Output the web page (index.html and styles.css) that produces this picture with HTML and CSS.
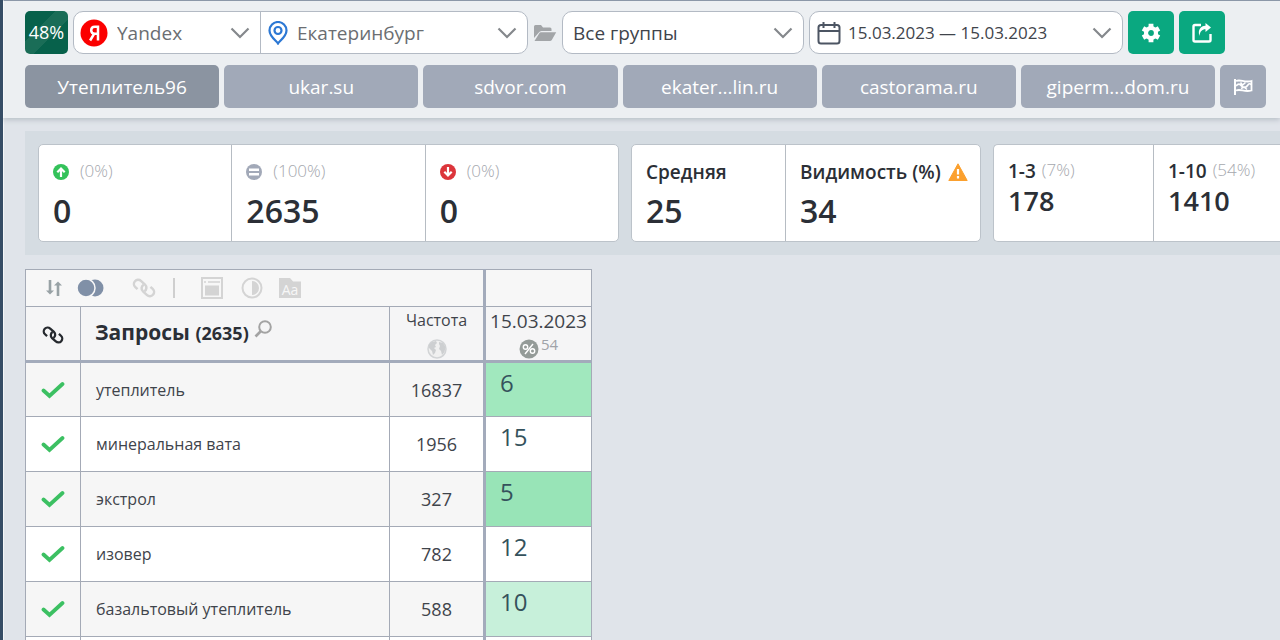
FILE: index.html
```html
<!DOCTYPE html>
<html lang="ru">
<head>
  <meta charset="utf-8">
  <title>Позиции - Утеплитель96</title>
  <meta name="viewport" content="width=device-width, initial-scale=1">
  <link rel="stylesheet" href="styles.css">
</head>
<body>
  <svg class="sprite" aria-hidden="true">
    <symbol id="chevron" viewBox="0 0 20 12"><path d="M1.5 1.5 10 10l8.500-8.500" fill="none" stroke="currentColor" stroke-width="2.200"/></symbol>
    <symbol id="check" viewBox="0 0 24 18"><path d="M2.500 9.500 8.500 15 21.500 3" fill="none" stroke="#3cc062" stroke-width="3.800" stroke-linecap="round"/></symbol>
    <symbol id="link" viewBox="0 0 24 24">
      <g fill="none" stroke="currentColor" stroke-width="2.500" transform="rotate(42 12 12)">
        <path d="M8 17.200H5a4.200 4.200 0 0 1 0-8.400h5.500a4.200 4.200 0 0 1 4 5.400"/>
        <path d="M16 6.800h3a4.200 4.200 0 0 1 0 8.400h-5.500a4.200 4.200 0 0 1-4-5.400"/>
      </g>
    </symbol>
  </svg>

  <div class="app">
    <header class="topbar">
      <div class="filters">
        <div class="progress">48%</div>

        <div class="field-group">
          <label class="field engine">
            <svg width="28" height="28" viewBox="0 0 28 28" aria-hidden="true">
              <circle cx="14" cy="14" r="13.500" fill="#fb0000"/>
              <path d="M18 6.500v15M18 7.700h-3.200c-4.800 0-4.800 7 0 7H18M14.300 14.500l-4.200 7" fill="none" stroke="#fff" stroke-width="2.500"/>
            </svg>
            <select aria-label="Поисковая система"><option>Yandex</option></select>
            <svg class="chevron" width="20" height="12"><use href="#chevron"/></svg>
          </label>
          <label class="field city">
            <svg width="20" height="24" viewBox="0 0 20 24" fill="none" stroke="#2c78d4" stroke-width="2.200" aria-hidden="true">
              <path d="M10 22.500C8.500 20 1.500 15.500 1.500 9.500a8.500 8.500 0 0 1 17 0c0 6-7 10.500-8.500 13z"/>
              <circle cx="10" cy="9.500" r="3.500"/>
            </svg>
            <select aria-label="Регион"><option>Екатеринбург</option></select>
            <svg class="chevron" width="20" height="12"><use href="#chevron"/></svg>
          </label>
        </div>

        <svg class="folder" width="24" height="18" viewBox="0 0 24 18" aria-hidden="true">
          <path d="M1 14V2.500A1.500 1.500 0 0 1 2.500 1H8l2 2.500h7A1.500 1.500 0 0 1 18.500 5v2H8.500a3 3 0 0 0-2.600 1.500z"/>
          <path d="M1.500 17 6.300 9.300A2 2 0 0 1 8 8.300h15.200l-4.400 7.600a2.200 2.200 0 0 1-1.900 1.100z"/>
        </svg>

        <label class="field rounded groups">
          <select aria-label="Группа"><option>Все группы</option></select>
          <svg class="chevron" width="20" height="12"><use href="#chevron"/></svg>
        </label>

        <button type="button" class="field rounded dates">
          <svg width="24" height="24" viewBox="0 0 24 24" fill="none" stroke="#4c5563" stroke-width="2" aria-hidden="true">
            <rect x="1.500" y="4" width="21" height="18.500" rx="2.500"/>
            <path d="M1.500 10h21M6.500 1v6M17.500 1v6"/>
          </svg>
          <span>15.03.2023 — 15.03.2023</span>
          <svg class="chevron" width="20" height="12"><use href="#chevron"/></svg>
        </button>

        <button type="button" class="action" aria-label="Настройки">
          <svg width="20" height="20" viewBox="0 0 20 20">
            <circle cx="10" cy="10" r="5" fill="none" stroke="#fff" stroke-width="4.200"/>
            <path d="M10 .8v4M10 15.200v4M2 5.400l3.500 2M14.500 12.600l3.500 2M2 14.600l3.500-2M14.500 7.400l3.500-2" stroke="#fff" stroke-width="4.800"/>
          </svg>
        </button>
        <button type="button" class="action" aria-label="Экспорт">
          <svg width="20" height="20" viewBox="0 0 20 20">
            <path d="M9 2H3a1.500 1.500 0 0 0-1.500 1.500V17A1.500 1.500 0 0 0 3 18.500h14a1.500 1.500 0 0 0 1.500-1.500v-6" fill="none" stroke="#fff" stroke-width="2.400"/>
            <path d="M13.500 0l5.500 4.500L13.500 9V6.300C10 6.300 8 8.500 7.500 13 5.500 7 8.500 3 13.500 2.800z" fill="#fff"/>
          </svg>
        </button>
      </div>

      <nav class="sites">
        <button type="button" class="site active">Утеплитель96</button>
        <button type="button" class="site">ukar.su</button>
        <button type="button" class="site">sdvor.com</button>
        <button type="button" class="site">ekater...lin.ru</button>
        <button type="button" class="site">castorama.ru</button>
        <button type="button" class="site">giperm...dom.ru</button>
        <button type="button" class="site flag" aria-label="Флаг">
          <svg width="20" height="18" viewBox="0 0 20 18" fill="none" stroke="#fff">
            <path d="M2 1v16" stroke-width="2"/>
            <path d="M3 3c5-2 8 2 15.500 0v9.500C11 14.500 8 10.500 3 12.500" stroke-width="1.800"/>
            <path d="M3 8c2.500-3 4-2 5.500 0s4.500 2 6-.5 2.500-2 4-1M7.500 4.500l2 2.500 3-2.500M8 10.500l3-1.500 3 2.500" stroke-width="1.600"/>
          </svg>
        </button>
      </nav>
    </header>

    <section class="summary">
      <div class="cards trend">
        <div class="card">
          <div class="card-title">
            <svg width="16" height="16" viewBox="0 0 16 16"><circle cx="8" cy="8" r="8" fill="#34c25a"/><path d="M8 13V5M4.300 8.200 8 4.500l3.700 3.700" fill="none" stroke="#fff" stroke-width="2.200"/></svg>
            <span class="share">(0%)</span>
          </div>
          <div class="value">0</div>
        </div>
        <div class="card">
          <div class="card-title">
            <svg width="16" height="16" viewBox="0 0 16 16"><circle cx="8" cy="8" r="8" fill="#a2a9b8"/><path d="M3 5.700h10M3 10.300h10" stroke="#fff" stroke-width="2.400"/></svg>
            <span class="share">(100%)</span>
          </div>
          <div class="value">2635</div>
        </div>
        <div class="card">
          <div class="card-title">
            <svg width="16" height="16" viewBox="0 0 16 16"><circle cx="8" cy="8" r="8" fill="#dc353b"/><path d="M8 3v8M4.300 7.800 8 11.500l3.700-3.700" fill="none" stroke="#fff" stroke-width="2.200"/></svg>
            <span class="share">(0%)</span>
          </div>
          <div class="value">0</div>
        </div>
      </div>

      <div class="cards average">
        <div class="card">
          <div class="card-title">Средняя</div>
          <div class="value">25</div>
        </div>
        <div class="card">
          <div class="card-title">Видимость (%)
            <svg width="20" height="18" viewBox="0 0 20 18"><path d="M10 .8 19.200 17.500H.8z" fill="#fba02e" stroke="#fba02e" stroke-linejoin="round"/><path d="M10 6v5.500M10 13v2.500" stroke="#fff" stroke-width="2.200"/></svg>
          </div>
          <div class="value">34</div>
        </div>
      </div>

      <div class="cards tops">
        <div class="card">
          <div class="card-title">1-3 <span class="share">(7%)</span></div>
          <div class="value">178</div>
        </div>
        <div class="card">
          <div class="card-title">1-10 <span class="share">(54%)</span></div>
          <div class="value">1410</div>
        </div>
      </div>
    </section>

    <table class="positions">
      <colgroup>
        <col class="col-check"><col class="col-query"><col class="col-freq"><col class="col-pos">
      </colgroup>
      <thead>
        <tr class="tools-row">
          <td colspan="3">
            <div class="tools">
              <svg width="18" height="16" viewBox="0 0 18 16" fill="none" stroke="#98a2a5" stroke-width="2.600"><path d="M5 0v12M13 16V4"/><path d="M1 10.500l4 4 4-4zM9 5.500l4-4 4 4z" fill="#98a2a5" stroke="none"/></svg>
              <svg class="tool-toggle" width="27" height="18" viewBox="0 0 27 18" fill="#8090a7"><circle cx="18" cy="9" r="8.500"/><circle cx="9" cy="9" r="9" stroke="#f7f7f7" stroke-width="1.500"/></svg>
              <svg class="tool-link" width="24" height="24"><use href="#link"/></svg>
              <span class="divider"></span>
              <svg class="tool-window" width="22" height="22" viewBox="0 0 22 22" fill="none" stroke="#d4d4d4" stroke-width="2"><path d="M1 1h20v20H1z"/><path d="M3 5h2M7 5h12" stroke-width="1.600"/><path d="M5 9.500h12v8H5z" fill="#d4d4d4"/></svg>
              <svg class="tool-contrast" width="22" height="22" viewBox="0 0 22 22"><circle cx="11" cy="11" r="9.500" fill="none" stroke="#d4d4d4" stroke-width="2"/><path d="M11 4a7 7 0 0 1 0 14z" fill="#d4d4d4"/></svg>
              <span class="tool-case">Aa</span>
            </div>
          </td>
          <td></td>
        </tr>
        <tr class="head-row">
          <th scope="col" aria-label="Ссылка"><svg class="head-link" width="22" height="22"><use href="#link"/></svg></th>
          <th scope="col" class="query">Запросы <small>(2635)</small>
            <svg class="search" width="18" height="18" viewBox="0 0 18 18" fill="none" stroke="#a3a3a3" stroke-width="2"><circle cx="11" cy="7" r="5.800"/><path d="M7 11l-5.500 5.500" stroke-width="2.600"/></svg>
          </th>
          <th scope="col" class="freq">Частота
            <svg width="20" height="20" viewBox="0 0 20 20"><circle cx="10" cy="10" r="9" fill="#f0f0f0" stroke="#d2d4d6" stroke-width="1.500"/><path d="M2 5.500 5 3l4-1 1 2-2 2 1 2-2 1 2 2-1 3-2 2-1-4-3-3zM12 3l4 1 2.500 4-1 5-2.500 3-1-4-2-2 1-3-1-2z" fill="#cdcfd1"/></svg>
          </th>
          <th scope="col" class="date">15.03.2023
            <span class="coverage">
              <svg width="20" height="20" viewBox="0 0 20 20"><circle cx="10" cy="10" r="9.500" fill="#949b98"/><g fill="none" stroke="#fff" stroke-width="1.400"><circle cx="6.500" cy="8" r="2.200"/><circle cx="13.500" cy="12" r="2.200"/><path d="M14 5l-8 10"/></g></svg>
              <sup>54</sup>
            </span>
          </th>
        </tr>
      </thead>
      <tbody>
        <tr><td><svg width="24" height="18"><use href="#check"/></svg></td><td class="query">утеплитель</td><td class="freq">16837</td><td class="pos top6">6</td></tr>
        <tr><td><svg width="24" height="18"><use href="#check"/></svg></td><td class="query">минеральная вата</td><td class="freq">1956</td><td class="pos">15</td></tr>
        <tr><td><svg width="24" height="18"><use href="#check"/></svg></td><td class="query">экстрол</td><td class="freq">327</td><td class="pos top5">5</td></tr>
        <tr><td><svg width="24" height="18"><use href="#check"/></svg></td><td class="query">изовер</td><td class="freq">782</td><td class="pos">12</td></tr>
        <tr><td><svg width="24" height="18"><use href="#check"/></svg></td><td class="query">базальтовый утеплитель</td><td class="freq">588</td><td class="pos top10">10</td></tr>
        <tr class="blank"><td></td><td></td><td></td><td></td></tr>
      </tbody>
    </table>
  </div>
</body>
</html>
```

FILE: styles.css
```css
* { box-sizing: border-box; }
body { margin: 0; font-family: "Open Sans", "Noto Sans", sans-serif; font-size: 19px; color: #3f444b; background: #e0e4ea; }
svg { display: block; flex: none; }
button, select { font: inherit; color: inherit; }
button { cursor: pointer; }

.sprite { display: none; }
.app { height: 100vh; overflow: hidden; border-left: 3px solid #364d66; box-shadow: inset 1px 0 #f4f6f8; }

/* top bar */
.topbar { padding: 10px 14px 10px 21px; background: #eceff2; border-top: 1px solid #8b97a8; border-left: 1px solid #f6f8fa; box-shadow: 0 2px 5px #b9c0c8; }
.filters { display: flex; align-items: center; gap: 5px; height: 43px; margin-bottom: 11px; }
.progress { width: 43px; height: 43px; font-size: 18px; line-height: 43px; text-align: center; color: #fff; border-radius: 5px; background: linear-gradient(135deg, #07614b 35%, #1a6d57 35%, #1a6d57 60%, #07614b 60%); }

.field-group { display: flex; height: 43px; background: #fff; border: 1px solid #b3bac4; border-radius: 10px; }
.field { display: flex; align-items: center; padding: 0 10px; }
.field select { flex: 1; min-width: 0; padding: 0; border: 0; outline: 0; background: none; appearance: none; }
.field.rounded { height: 43px; background: #fff; border: 1px solid #b3bac4; border-radius: 10px; }
.chevron { color: #85888c; pointer-events: none; }
.engine { width: 187px; padding-left: 6px; gap: 9px; color: #6b6e72; border-right: 1px solid #b3bac4; }
.city { width: 266px; padding-left: 7px; gap: 9px; color: #6b6e72; }
.folder { fill: #a2a5a8; }
.groups { width: 242px; padding-left: 10px; }
.dates { width: 314px; padding-left: 7px; gap: 7px; font-size: 17px; }
.dates span { flex: 1; text-align: left; }
.action { display: flex; align-items: center; justify-content: center; width: 46px; height: 43px; padding: 0; border: 0; border-radius: 5px; background: #0aa880; }

.sites { display: flex; gap: 5px; }
.site { flex: 1; height: 43px; padding: 0; border: 0; border-radius: 5px; color: #fff; background: #a1a9b8; }
.site.active { background: #8b94a1; }
.site.flag { flex: none; width: 46px; display: flex; align-items: center; justify-content: center; }

/* summary cards */
.summary { display: flex; gap: 12px; margin: 13px 0 14px 22px; padding: 13px 0 13px 13px; background: #d5dce2; }
.cards { display: flex; flex: none; height: 98px; background: #fff; border: 1px solid #bcc3ca; border-radius: 5px; }
.card { flex: 1; padding: 12px 14px; color: #2b2f36; }
.card + .card { border-left: 1px solid #b6bcc3; }
.trend { width: 581px; }
.average { width: 350px; }
.average .card:first-child { flex: none; width: 153px; }
.tops { flex: 1; border-right: 0; border-radius: 5px 0 0 5px; }
.tops .card:first-child { flex: none; width: 159px; }
.card-title { display: flex; align-items: center; gap: 7px; height: 30px; font-size: 19px; font-weight: 600; white-space: nowrap; }
.trend .card-title { gap: 11px; }
.tops .card-title { gap: 6px; height: 28px; }
.share { font-size: 17px; line-height: 24px; padding-bottom: 3px; font-weight: 300; color: #a5a8ae; }
.value { font-size: 32px; line-height: 48px; font-weight: 600; }
.tops .value { font-size: 27px; line-height: 32px; }

/* positions table */
.positions { width: 567px; margin-left: 22px; table-layout: fixed; border-collapse: collapse; background: #fff; }
.positions td, .positions th { padding: 0; border: 1px solid #a4aab6; }
.positions td:last-child, .positions th:last-child { border-left: 3px solid #a3abbb; }
.col-check { width: 55px; }
.col-query { width: 309px; }
.col-freq { width: 95px; }
.col-pos { width: 107px; }
.tools-row td { height: 37px; background: #f7f7f7; }
.tools { display: flex; align-items: center; padding-left: 19px; color: #d4d4d4; }
.tool-toggle { margin-left: 14px; }
.tool-link { margin-left: 28px; }
.divider { width: 2px; height: 20px; margin: 0 26px 0 17px; background: #cfcfcf; }
.tool-contrast { margin: 0 16px 0 18px; }
.tool-case { width: 22px; height: 20px; padding-top: 4px; font-size: 14px; line-height: 16px; text-align: center; color: #f7f7f7; background: #d4d4d4; clip-path: polygon(0 0, 50% 0, 64% 18%, 100% 18%, 100% 100%, 0 100%); }

.head-row th { height: 55px; font-weight: 400; background: #f5f5f6; border-bottom: 3px solid #a3abbb; }
.head-row svg { display: inline-block; }
.head-link { color: #25292e; vertical-align: middle; }
.positions .head-row .query { padding: 0 0 4px 14px; font-size: 21px; font-weight: 700; color: #2b2f36; }
.head-row small { font-size: 18px; }
.head-row .search { vertical-align: 2px; }
.head-row .freq { font-size: 16px; line-height: 26px; vertical-align: top; }
.head-row .freq svg { display: block; margin: 6px auto 0; }
.head-row .date { line-height: 28px; vertical-align: top; }
.coverage { display: flex; justify-content: center; gap: 2px; height: 24px; }
.coverage svg { margin-top: 4px; }
.coverage sup { font-size: 15px; line-height: 18px; color: #a0a3a8; }

tbody td { height: 55px; }
tbody td svg { margin: 0 auto; }
tbody tr:nth-child(odd) td { background: #f6f6f6; }
.positions .query { padding-left: 15px; text-align: left; }
tbody .query { font-size: 16px; }
tbody .freq { font-size: 18px; text-align: center; }
.positions .pos { padding: 2px 0 0 14px; font-size: 24px; line-height: 36px; vertical-align: top; color: #35525c; }
.positions tr .top5 { background: #98e4b7; }
.positions tr .top6 { background: #a1e8be; }
.positions tr .top10 { background: #c7f0da; }
.positions tr.blank td { background: #fff; }
```
